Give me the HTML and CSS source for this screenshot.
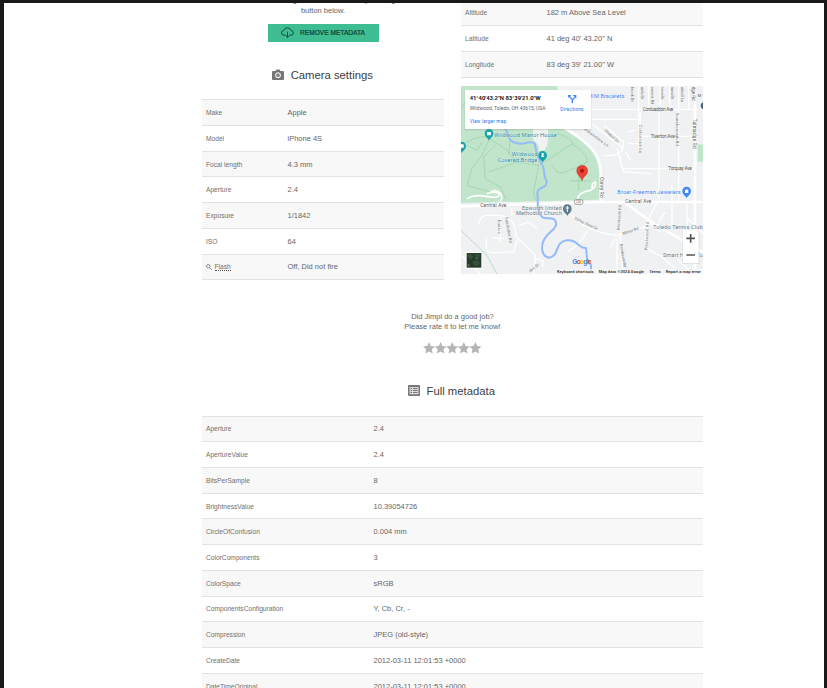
FILE: index.html
```html
<!DOCTYPE html>
<html lang="en">
<head>
<meta charset="utf-8">
<title>Jimpl</title>
<link rel="stylesheet" href="styles.css">
</head>
<body>
<div class="frame">
<main class="page">
  <div class="columns">
    <section class="column">
      <p class="intro">Remove the image and all metadata by clicking the<br>button below.</p>
      <button class="remove">
        <svg class="cloud" viewBox="0 0 24 20" fill="none" stroke="currentColor" stroke-width="1.6"><path d="M9 15H5.5a4.3 4.3 0 0 1-.4-8.6 7 7 0 0 1 13.4 0 4.3 4.3 0 0 1 0 8.6H15M12 8.500v10.500M9 16l3 3 3-3"/></svg>
        <span>REMOVE METADATA</span>
      </button>
      <h2 class="heading camera-heading">
        <svg class="camera" viewBox="0 0 24 22"><path fill="#777" d="M2 4h5l2-3h6l2 3h5a2 2 0 0 1 2 2v14a2 2 0 0 1-2 2H2a2 2 0 0 1-2-2V6a2 2 0 0 1 2-2z"/><circle cx="12" cy="12.500" r="5" fill="#888" stroke="#fff" stroke-width="2"/></svg>
        <span>Camera settings</span>
      </h2>
      <dl class="rows">
        <div class="row"><dt>Make</dt><dd>Apple</dd></div>
        <div class="row"><dt>Model</dt><dd>iPhone 4S</dd></div>
        <div class="row"><dt>Focal length</dt><dd>4.3 mm</dd></div>
        <div class="row"><dt>Aperture</dt><dd>2.4</dd></div>
        <div class="row"><dt>Exposure</dt><dd>1/1842</dd></div>
        <div class="row"><dt>ISO</dt><dd>64</dd></div>
        <div class="row"><dt><svg class="search" viewBox="0 0 12 12" fill="none" stroke="#666" stroke-width="1.500"><circle cx="4.500" cy="4.500" r="3.500"/><path d="M7 7l4.500 4.500"/></svg><span class="hint">Flash</span></dt><dd>Off, Did not fire</dd></div>
      </dl>
    </section>
    <section class="column">
      <dl class="rows location">
        <div class="row"><dt>Altitude</dt><dd>182 m Above Sea Level</dd></div>
        <div class="row"><dt>Latitude</dt><dd>41 deg 40' 43.20" N</dd></div>
        <div class="row"><dt>Longitude</dt><dd>83 deg 39' 21.00" W</dd></div>
      </dl>
      <svg class="map" viewBox="12 12 726 564">
        <rect x="12" y="12" width="726" height="564" fill="#eff1f3"/>
        <path class="park" d="M12 12H300L330 145 380 178 410 208Q428 232 430 270V353L12 363z"/>
        <path class="park" d="M722 187h20v52h-20z"/>
        <path fill="#eff1f3" d="M228 135V172L243 188 247 207 262 205 272 188 273 140z"/>
        <g class="street">
          <path d="M403 82H715M403 112H550M545 12V205M575 12V90M610 12V85M638 12V85M665 12V360M695 12V85M550 163H715M550 90V190M606 90V355M495 260H715M440 130L500 180 495 205Q480 225 440 220M480 200L500 270 585 275M515 185h35M515 150l20-5M520 235l-15-25M405 125l95 75M645 310V430M600 362L560 440M690 365V450M625 390l-20 30M738 455l-45-45"/>
          <path d="M490 360Q485 480 500 576M345 400Q390 450 480 460L540 445 580 425 610 450M600 362M575 425Q560 460 570 500L605 520M390 448Q370 490 330 510M475 470L460 495M65 425Q70 405 85 400H130Q160 405 172 430L178 465 235 520 230 576M130 405V480M90 470Q80 510 105 512L170 510 180 475M185 430l30-10 25 20M165 380V400M235 530l22 5v20M140 470l-35-2M12 520L70 576M610 520L655 560M480 470V576M660 530L710 576"/>
        </g>
        <g class="road"><path d="M12 373L430 360H738M300 125Q380 170 410 208 428 232 431 270V360M714 12V576M505 363L590 425 738 510"/><path class="trail" d="M30 350C60 330 100 350 120 345 140 335 110 325 90 335M110 372Q145 355 130 333 118 320 100 330"/></g>
        <path class="path" d="M12 190Q60 160 90 165L150 205 180 240 245 250 270 235 330 195 350 185M100 165L75 220 45 260 30 310 100 330M115 190L80 225 85 290 130 315 145 350M75 180L60 205 30 190M180 240L95 270M160 170L155 215M245 250L230 330 235 355M300 155Q340 165 350 190 390 210 390 240L360 260M285 250Q300 280 325 270L375 250M365 265V325M340 297H400M12 445L90 520 120 576M12 80L50 30"/>
        <path class="road trail" d="M362 350Q365 330 400 325 420 315 415 300 405 300 405 318"/>
        <path class="river" d="M140 135C160 155 150 178 175 182 205 195 210 170 233 185L240 215 250 240C270 265 255 280 269 298 270 325 240 310 241 335 245 350 235 390 258 407L290 410C310 430 285 445 270 460 245 490 255 525 277 527 310 520 290 480 330 475 360 470 365 500 387 498L390 530 402 550V576"/>
        <g class="place" fill="#18839a">
          <text x="112" y="165" textLength="187">Wildwood Manor House</text>
          <text x="164" y="222" textLength="77">Wildwood</text>
          <text x="122" y="240" textLength="119">Covered Bridge</text>
        </g>
        <g class="place" fill="#617b88">
          <text x="195" y="383" textLength="119">Epworth United</text>
          <text x="177" y="400" textLength="138">Methodist Church</text>
          <text x="588" y="440" textLength="149">Toledo Tennis Club</text>
          <text x="618" y="524" textLength="119">Smart Home To</text>
        </g>
        <g class="place" fill="#4285f4">
          <text x="400" y="49" textLength="102">KM Bracelets</text>
          <text x="481" y="337" textLength="190">Broer-Freeman Jewelers</text>
        </g>
        <g class="street-name">
          <text x="70" y="374" textLength="78">Central Ave</text>
          <text x="505" y="363" textLength="78">Central Ave</text>
          <text x="557" y="87" textLength="92">Corduaddon Ave</text>
          <text x="581" y="168" textLength="72">Tiverton Ave</text>
          <text x="634" y="263" textLength="70">Torquay Ave</text>
          <text x="722" y="46" font-size="12">M</text>
          <text transform="translate(708 110) rotate(90)" textLength="90">Talmadge Rd</text>
          <text transform="translate(705 14) rotate(90)" textLength="42">dge Rd</text>
          <text transform="translate(428 285) rotate(90)" textLength="62">Corey Rd</text>
          <g class="minor">
            <text transform="translate(546 128) rotate(90)" textLength="85">Coldstream Ln</text>
            <text transform="translate(657 93) rotate(90)" textLength="98">Scarsborough Rd</text>
            <text transform="translate(521 14) rotate(90)">brook Dr</text>
            <text transform="translate(551 14) rotate(90)">ards Dr</text>
            <text transform="translate(583 14) rotate(90)">ewster Rd</text>
            <text transform="translate(612 14) rotate(90)">tona Dr</text>
            <text transform="translate(643 14) rotate(90)">tuna Dr</text>
            <text transform="translate(672 14) rotate(90)">alwell Ln</text>
            <text transform="translate(380 143) rotate(36)" textLength="88">Indianmere Ln</text>
            <text transform="translate(441 146) rotate(42)" textLength="55">Chapel Dr</text>
            <text transform="translate(350 411) rotate(26)" textLength="78">Valley View Dr</text>
            <text transform="translate(498 459) rotate(-18)" textLength="50">Milner Rd</text>
            <text transform="translate(488 444) rotate(-86)" textLength="75">Brookside Rd</text>
            <text transform="translate(488 487) rotate(80)" textLength="70">Brookhurst Rd</text>
            <text transform="translate(571 505) rotate(-87)" textLength="85">Westwood Rd</text>
            <text transform="translate(122 413) rotate(90)" textLength="43">Eunice</text>
            <text transform="translate(144 406) rotate(80)" textLength="78">Sandralee Rd</text>
            <text transform="translate(220 571) rotate(-38)">den Dr</text>
          </g>
        </g>
        <rect x="352" y="353" width="26" height="14" rx="6" fill="#fff" stroke="#777" stroke-width="2"/><text x="357" y="364" font-size="9" fill="#555">120</text>
        <g fill="#16a3ad"><path d="M96 176c-2-8-13-10-13-22a13 13 0 0 1 26 0c0 12-11 14-13 22zM257 242c-2-8-13-10-13-22a13 13 0 0 1 26 0c0 12-11 14-13 22zM14 214c-2-8-13-10-13-22a13 13 0 0 1 26 0c0 12-11 14-13 22z"/></g>
        <path fill="#617b88" d="M331 402c-2-8-13-10-13-22a13 13 0 0 1 26 0c0 12-11 14-13 22z"/><path d="M331 372v18M326 378h10" stroke="#fff" stroke-width="3"/>
        <path fill="#4285f4" d="M689 349c-2-8-13-10-13-22a13 13 0 0 1 26 0c0 12-11 14-13 22z"/>
        <path fill="#fff" d="M90 150h12v10H90zM252 214h10l-3 5 3 6h-10l3-6zM10 187h10v10H10zM684 324h10v9h-10z"/>
        <path d="M686 325q3-8 6 0" fill="none" stroke="#fff" stroke-width="2"/>
        <circle cx="742" cy="71" r="11" fill="#4a667a"/>
        <path d="M375 297c-2-14-16-16-16-31a16.500 16.500 0 0 1 33 0c0 15-15 17-17 31z" fill="#ea4335" stroke="#c5221f"/><circle cx="375" cy="266" r="6" fill="#a31815"/>
        <rect x="23" y="25" width="380" height="120" fill="#777" opacity=".22"/>
        <rect x="24" y="24" width="378" height="117" fill="#fff"/>
        <g class="card">
          <text class="coords" x="38" y="55" textLength="213" lengthAdjust="spacingAndGlyphs">41°40'43.2"N 83°39'21.0"W</text>
          <text x="38" y="84" fill="#666" textLength="228" lengthAdjust="spacingAndGlyphs">Wildwood, Toledo, OH 43615, USA</text>
          <text x="38" y="124" fill="#1a73e8" textLength="109">View larger map</text>
          <text x="310" y="87" fill="#1a73e8" textLength="69">Directions</text>
        </g>
        <path d="M346 64V53L337 43M346 55L353 46" fill="none" stroke="#4285f4" stroke-width="4"/><path d="M333 39h10l-9 9zM347 39h11v11z" fill="#4285f4"/>
        <rect x="26" y="510" width="50" height="50" fill="#fff"/><rect x="29" y="513" width="44" height="44" fill="#263d2b"/>
        <path d="M29 520l12-5 8 10-9 8zM52 515l18 4-8 13zM44 540l18-5 8 12-14 6z" fill="#36513a"/><path d="M31 545l8 4-4 6zM55 526l8 3-6 3z" fill="#61735a"/>
        <rect x="676" y="446" width="51" height="100" fill="#777" opacity=".25"/><rect x="677" y="445" width="48" height="99" fill="#fff"/>
        <path d="M688 469h26M701 456v26M688 519h26" stroke="#555" stroke-width="5"/>
        <text class="google" x="346" y="546" textLength="57"><tspan fill="#4285f4">G</tspan><tspan fill="#ea4335">o</tspan><tspan fill="#fbbc05">o</tspan><tspan fill="#4285f4">g</tspan><tspan fill="#34a853">l</tspan><tspan fill="#ea4335">e</tspan></text>
        <rect x="296" y="561" width="442" height="15" fill="#f5f6f7" opacity=".85"/>
        <g class="legal">
          <text x="300" y="573" textLength="110">Keyboard shortcuts</text>
          <text x="425" y="573" textLength="136">Map data ©2024 Google</text>
          <text x="577" y="573" textLength="34">Terms</text>
          <text x="626" y="573" textLength="105">Report a map error</text>
        </g>
      </svg>
    </section>
  </div>
  <section class="rating">
    <p>Did Jimpl do a good job?<br>Please rate it to let me know!</p>
    <svg class="stars" viewBox="0 0 59 12"><defs><path id="star" d="M6 0l1.800 3.900 4.200.5-3.100 2.900.8 4.300L6 9.500l-3.700 2.100.8-4.300L0 4.400l4.200-.5z"/></defs><g fill="#b5b5b5"><use href="#star"/><use href="#star" x="11.600"/><use href="#star" x="23.200"/><use href="#star" x="34.800"/><use href="#star" x="46.400"/></g></svg>
  </section>
  <section>
    <h2 class="heading full-heading">
      <svg class="list" viewBox="0 0 24 22"><rect width="24" height="22" rx="2" fill="#777"/><rect x="3" y="4" width="18" height="14.500" fill="#ddd"/><path d="M5 7h3M5 11h3M5 15h3M10 7h9M10 11h9M10 15h9" stroke="#777" stroke-width="2"/></svg>
      <span>Full metadata</span>
    </h2>
    <dl class="rows full">
      <div class="row"><dt>Aperture</dt><dd>2.4</dd></div>
      <div class="row"><dt>ApertureValue</dt><dd>2.4</dd></div>
      <div class="row"><dt>BitsPerSample</dt><dd>8</dd></div>
      <div class="row"><dt>BrightnessValue</dt><dd>10.39054726</dd></div>
      <div class="row"><dt>CircleOfConfusion</dt><dd>0.004 mm</dd></div>
      <div class="row"><dt>ColorComponents</dt><dd>3</dd></div>
      <div class="row"><dt>ColorSpace</dt><dd>sRGB</dd></div>
      <div class="row"><dt>ComponentsConfiguration</dt><dd>Y, Cb, Cr, -</dd></div>
      <div class="row"><dt>Compression</dt><dd>JPEG (old-style)</dd></div>
      <div class="row"><dt>CreateDate</dt><dd>2012-03-11 12:01:53 +0000</dd></div>
      <div class="row"><dt>DateTimeOriginal</dt><dd>2012-03-11 12:01:53 +0000</dd></div>
    </dl>
  </section>
</main>
</div>
</body>
</html>
```
FILE: styles.css
```css
* { box-sizing: border-box; }
body { margin: 0; background: #fff; font-family: "Liberation Sans", Arial, sans-serif; font-size: 7.5px; color: #666; }
p, h2, dl, dd { margin: 0; }
.frame { height: 688px; overflow: hidden; border: solid #1a1819; border-width: 3px 3px 0 4px; }
.page { width: 501px; margin-left: 198px; }
.columns { display: grid; grid-template-columns: 242px 242px; gap: 17px; height: 277.500px; }
.column { display: flex; flex-direction: column; align-items: center; }
.intro { margin-top: -8px; line-height: 10.500px; text-align: center; white-space: nowrap; }
.remove { display: flex; align-items: center; justify-content: center; gap: 6px; flex: none; width: 111px; height: 18px; margin-top: 7.500px; padding: 0; border: 0; background: #3ebd93; color: #123c30; font: 6.600px "Liberation Sans", Arial, sans-serif; -webkit-text-stroke: .2px #123c30; }
.cloud { width: 13px; height: 11px; }
.heading { display: flex; align-items: center; justify-content: center; gap: 6.500px; height: 16px; font-size: 11.300px; font-weight: 400; color: #404040; }
.camera-heading { margin-top: 25px; margin-right: 1px; }
.camera, .list { width: 12px; height: 11px; }
.rows { width: 100%; border-top: 1px solid #e2e2e2; }
.camera-heading + .rows { margin-top: 16.800px; }
.row { display: grid; grid-template-columns: 81.500px 1fr; align-items: center; height: 25.720px; padding-left: 4px; border-bottom: 1px solid #e2e2e2; }
.row:nth-child(odd) { background: #f8f8f8; }
dt { display: flex; align-items: center; font-size: 6.650px; color: #707070; }
.search { width: 6px; height: 6px; margin-right: 2.500px; }
.hint { border-bottom: 1px dotted #555; line-height: 7px; }
.location { margin-top: -3.600px; }
.map { width: 242px; height: 188px; margin-top: 8.500px; flex: none; overflow: hidden; }
.park { fill: #c0e5ca; }
.street, .road { fill: none; stroke: #fff; stroke-width: 4; stroke-linejoin: round; }
.road { stroke-width: 8; }
.trail { stroke-width: 5; }
.path { fill: none; stroke: #87c79b; stroke-width: 2; stroke-dasharray: 6 2; }
.river { fill: none; stroke: #94bafa; stroke-width: 6; stroke-linejoin: round; }
.place { font-size: 17px; stroke: #fff; stroke-width: 2px; stroke-opacity: .7; paint-order: stroke; }
.place, .card, .legal, .street-name { font-family: Roboto, sans-serif; }
.street-name { font-size: 14px; fill: #555; }
.minor { font-size: 12px; fill: #777; }
.card { font-size: 14px; }
.coords { font-size: 17px; font-weight: 700; fill: #222; }
.google { font-size: 20px; font-weight: 700; }
.legal { font-size: 12px; font-weight: 500; fill: #222; }
.rating { display: flex; flex-direction: column; align-items: center; margin-top: 31px; text-align: center; line-height: 10.500px; }
.stars { width: 59px; height: 12px; margin-top: 9.500px; }
.full-heading { margin-top: 28.500px; margin-right: 2px; }
.full { margin-top: 17px; }
.full .row { grid-template-columns: 167.500px 1fr; }
```
